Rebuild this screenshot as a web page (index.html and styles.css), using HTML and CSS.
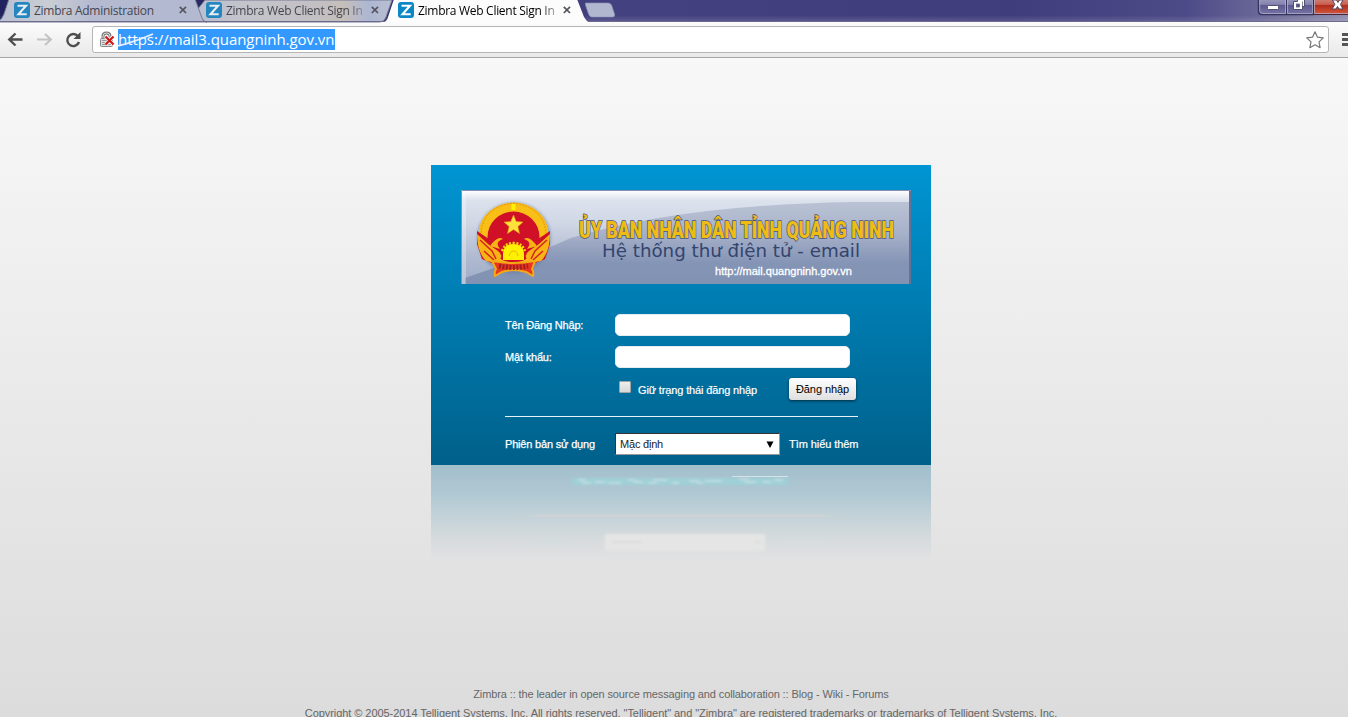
FILE: index.html
```html
<!DOCTYPE html>
<html lang="vi">
<head>
<meta charset="utf-8">
<title>Zimbra Web Client Sign In</title>
<link rel="stylesheet" href="styles.css">
</head>
<body>
<header class="tabstrip">
  <svg class="tab-shapes" width="1348" height="23" viewBox="0 0 1348 23">
    <defs>
      <linearGradient id="t1" x1="0" x2="1" y1="0" y2="0"><stop offset="0" stop-color="#b9bfd2"/><stop offset=".25" stop-color="#c9cdd4"/><stop offset=".45" stop-color="#b5bad0"/><stop offset="1" stop-color="#b2b9d0"/></linearGradient>
      <linearGradient id="t2" x1="0" x2="1" y1="0" y2="0"><stop offset="0" stop-color="#babfd0"/><stop offset=".25" stop-color="#c3c4cb"/><stop offset=".6" stop-color="#c3c0c4"/><stop offset=".75" stop-color="#c5beba"/><stop offset=".88" stop-color="#adb7d3"/><stop offset="1" stop-color="#b9bfd0"/></linearGradient>
      <linearGradient id="glass" x1="0" x2="0" y1="0" y2="1"><stop offset="0" stop-color="#9998bc"/><stop offset=".35" stop-color="#8583ad"/><stop offset=".4" stop-color="#5b5990"/><stop offset="1" stop-color="#7775a6"/></linearGradient>
      <linearGradient id="red" x1="0" x2="0" y1="0" y2="1"><stop offset="0" stop-color="#d08178"/><stop offset=".35" stop-color="#c85f50"/><stop offset=".4" stop-color="#b12c1c"/><stop offset="1" stop-color="#d55a3d"/></linearGradient>
    </defs>
    <path d="M205 0H392L386 17Q384 22 379 22H206Q203 22 201 17L197 10Z" fill="url(#t2)" stroke="#777b93"/>
    <path d="M-3 22Q2 20 4 14L9 -1H195L202 18Q203 22 207 22Z" fill="url(#t1)" stroke="#777b93"/>
    <path d="M0 21.500H1348" stroke="#6c6b8d"/>
    <path d="M383 23Q387 21 388 17L394 -1H577L584 17Q586 21 590 23Z" fill="#fcfcfc"/>
    <path d="M585.500 3H608Q610.500 3 611.500 5L614.500 14Q615.500 17 612.500 17H592Q589.500 17 588.500 14L585.500 5Z" fill="#b0b7cf" stroke="#8f94b6" stroke-width=".6"/>
    <path d="M1258.500 -1V11Q1258.500 14.500 1262 14.500H1313V-1Z" fill="url(#glass)" stroke="#35345f" stroke-width="1.500"/>
    <path d="M1313.500 -1V14.500H1349V-1Z" fill="url(#red)" stroke="#4e2335"/>
    <path d="M1259.700 0V11Q1260 13.500 1263 13.500H1285.500V0M1287.500 0V13.500H1312.500V0M1314.500 0V13.500H1348" fill="none" stroke="#b5b3d0" stroke-opacity=".75"/>
    <path d="M1286.500 0V14" stroke="#35345f"/>
    <rect x="1267.500" y="5.500" width="11" height="4" rx="1" fill="#fff" stroke="#50506f"/>
    <path d="M1297.500 -1H1304.500V6.500H1302.500V9.500H1293.500V1.500H1297.500Z" fill="#fff" stroke="#50506f"/>
    <rect x="1296.500" y="4" width="3" height="3" fill="#58568c" stroke="#50506f" stroke-width=".7"/>
    <path d="M1302.500 1.500V7" stroke="#50506f" stroke-width=".7"/>
    <path d="M1332.500 0H1336.500L1338 2.500L1339.500 0H1343L1340.500 4.500L1343 9H1339L1337.500 6.500L1336 9H1332L1334.800 4.500Z" fill="#fff" stroke="#5b4054"/>
  </svg>
  <div class="tab"><svg class="fav" viewBox="0 0 16 16"><rect width="16" height="16" rx="3" fill="#2386be"/><path d="M3.500 3.800H12L4.500 12.300H12.700" fill="none" stroke="#e8edf4" stroke-width="2.100"/></svg><span class="tab-title">Zimbra Administration</span><svg class="x" viewBox="0 0 8 8"><path d="M.8 .8L7 7M7 .8L.8 7"/></svg></div>
  <div class="tab"><svg class="fav" viewBox="0 0 16 16"><rect width="16" height="16" rx="3" fill="#2386be"/><path d="M3.500 3.800H12L4.500 12.300H12.700" fill="none" stroke="#e8edf4" stroke-width="2.100"/></svg><span class="tab-title fade">Zimbra Web Client Sign In</span><svg class="x" viewBox="0 0 8 8"><path d="M.8 .8L7 7M7 .8L.8 7"/></svg></div>
  <div class="tab active"><svg class="fav" viewBox="0 0 16 16"><rect width="16" height="16" rx="3" fill="#0b87c5"/><path d="M3.500 3.800H12L4.500 12.300H12.700" fill="none" stroke="#fff" stroke-width="2.100"/></svg><span class="tab-title fade">Zimbra Web Client Sign In</span><svg class="x" viewBox="0 0 8 8"><path d="M.8 .8L7 7M7 .8L.8 7"/></svg></div>
</header>
<nav class="toolbar">
  <svg class="nav-icons" width="92" height="35" viewBox="0 22 92 35">
    <path d="M22.500 39.500H10M15.500 33.500L9.300 39.500L15.500 45.500" fill="none" stroke="#4e4e4e" stroke-width="2.400"/>
    <path d="M37 39.500H50M45 34L51 39.500L45 45" fill="none" stroke="#c3c3c3" stroke-width="2"/>
    <path d="M78 36.300A6 6 0 1 0 79 42" fill="none" stroke="#4e4e4e" stroke-width="2.400"/>
    <path d="M80.500 32V39H73.500Z" fill="#4e4e4e"/>
  </svg>
  <div class="omnibox">
    <svg class="lock" width="17" height="18" viewBox="0 0 17 18"><path d="M4 8V5Q4 2 7.500 2T11 5V8" fill="none" stroke="#777" stroke-width="3"/><path d="M4 8V5Q4 2 7.500 2T11 5V8" fill="none" stroke="#ddd"/><rect x="1.500" y="7.500" width="12" height="8" rx="1" fill="#ddd" stroke="#888"/><path d="M3 9.500H12M3 11.500H12M3 13.500H12" stroke="#999"/><path d="M6.500 5.500L14.500 13.500M14.500 5.500L6.500 13.500" stroke="#fff" stroke-width="3.800"/><path d="M6.500 5.500L14.500 13.500M14.500 5.500L6.500 13.500" stroke="#cc1712" stroke-width="2.200"/></svg>
    <span class="url">https://mail3.quangninh.gov.vn<svg class="strike" width="36" height="16" viewBox="0 0 36 16"><path d="M0 14Q16 10 35 2" fill="none" stroke="#e7f1fc" stroke-width="1.800"/></svg></span>
    <svg class="star" width="18" height="18" viewBox="0 0 18 18"><path d="M9 .8L11.500 6.200L17.300 6.900L13 10.900L14.100 16.700L9 13.800L3.900 16.700L5 10.900L.7 6.900L6.500 6.200Z" fill="#fff" stroke="#777" stroke-width="1.200" stroke-linejoin="round"/></svg>
  </div>
  <svg class="menu" width="8" height="14" viewBox="0 0 8 14"><path d="M0 1.500H8M0 6.500H8M0 11.500H8" stroke="#555" stroke-width="3"/></svg>
</nav>
<main class="page">
  <section class="card">
    <svg class="banner" width="450" height="94" viewBox="0 0 450 94">
      <defs>
        <linearGradient id="bg" x1="0" x2="0" y1="0" y2="1"><stop offset="0" stop-color="#e2e7f0"/><stop offset=".35" stop-color="#d0d7e5"/><stop offset=".7" stop-color="#b1bbd1"/><stop offset="1" stop-color="#9fabc7"/></linearGradient>
        <linearGradient id="swoop" x1="0" x2="0" y1="0" y2="1"><stop offset="0" stop-color="#bac3d5"/><stop offset=".38" stop-color="#a7b1c9"/><stop offset=".75" stop-color="#8494b5"/><stop offset="1" stop-color="#8192b3"/></linearGradient>
        <linearGradient id="shine" x1="0" x2="0" y1="0" y2="1"><stop offset="0" stop-color="#fff"/><stop offset="1" stop-color="#fff" stop-opacity="0"/></linearGradient>
        <filter id="soft" x="-10%" y="-10%" width="120%" height="120%"><feGaussianBlur stdDeviation="1.500"/></filter>
      </defs>
      <rect width="450" height="94" fill="url(#bg)"/>
      <path d="M4 88Q70 66 110 48Q219 15 390 12H450V94H4Z" fill="url(#swoop)"/>
      <rect width="450" height="10" fill="url(#shine)"/>
      <rect x="1" y="1" width="4" height="93" fill="#fff" opacity=".3"/>
      <path d="M.5 94V.5H450" fill="none" stroke="#8a8fb2"/>
      <path d="M449 1V94" stroke="#657297" stroke-width="2"/>
      <ellipse cx="53" cy="48" rx="37" ry="36" fill="#6b7a9f" opacity=".5" filter="url(#soft)"/>
      <ellipse cx="52.500" cy="44.500" rx="35" ry="32" fill="#f9bf16"/>
      <path d="M20 43Q22 17 52 13Q83 17 85 43" fill="none" stroke="#e59312" stroke-width="1" stroke-dasharray="2 1"/>
      <ellipse cx="52.500" cy="47" rx="26" ry="25.500" fill="#cf1027"/>
      <path d="M16 41L31 51L40 59L33 74L21 69L16 54ZM89 41L74 51L65 59L72 74L84 69L89 54Z" fill="#cf1027"/>
      <path d="M16 44Q16 62 25 71L36 73Q44 66 37 61L27 54ZM89 44Q89 62 80 71L69 73Q61 66 68 61L78 54ZM29 56Q37 45 42 49Q33 52 39 59ZM76 56Q68 45 63 49Q72 52 66 59Z" fill="#f8b316"/>
      <path d="M19 50L31 61L35 69M86 50L74 61L70 69M23 61L33 70M82 61L72 70" stroke="#d3261d" stroke-width="1.500" fill="none"/>
      <path d="M42 70V63Q43 54 52.500 54T63 63V70Z" fill="#fff000"/>
      <path d="M41 61Q44 53 52.500 53T64 61" fill="none" stroke="#ffd70b" stroke-width="2.500" stroke-dasharray="2 1.500"/>
      <path d="M48 66Q49 61 52.500 61T57 66" fill="none" stroke="#e9b500"/>
      <path d="M31 71Q52 75 74 71L71 79Q73 82 72 86L65 82Q52 78 41 82L34 86Q33 82 35 79Z" fill="#e73520" stroke="#f5a818" stroke-width="2"/>
      <path d="M38 76Q52 79 67 76" stroke="#9e2020" stroke-width="5" stroke-dasharray="2 1.500" fill="none"/>
      <path d="M52.500 25L55.200 31.600L62 32L56.900 36.600L58.500 43.500L52.500 39.600L46.500 43.500L48.100 36.600L43 32L49.800 31.600Z" fill="#ffe23b" stroke="#e99d12" stroke-width=".6"/>
      <path d="M52.500 14V20" stroke="#fff000" stroke-width="4"/>
      <text class="b-title" x="118" y="47.500" textLength="315" lengthAdjust="spacingAndGlyphs">ỦY BAN NHÂN DÂN TỈNH QUẢNG NINH</text>
      <text class="b-sub" x="141" y="67" textLength="258" lengthAdjust="spacingAndGlyphs">Hệ thống thư điện tử - email</text>
      <text class="b-url" x="254" y="85" textLength="137" lengthAdjust="spacingAndGlyphs">http://mail.quangninh.gov.vn</text>
    </svg>
    <form class="form">
      <div class="row"><label class="lab">Tên Đăng Nhập:</label><input class="field" type="text"></div>
      <div class="row"><label class="lab">Mật khẩu:</label><input class="field" type="password"></div>
      <div class="row remember"><i class="check"></i><span class="keep">Giữ trạng thái đăng nhập</span><button class="btn" type="button">Đăng nhập</button></div>
      <div class="rule"></div>
      <div class="row version"><label class="lab">Phiên bản sử dụng</label><div class="select"><span>Mặc định</span><svg width="8" height="7" viewBox="0 0 8 7"><path d="M.5 .5H7.500L4 7Z"/></svg></div><a class="more">Tìm hiểu thêm</a></div>
    </form>
  </section>
  <svg class="reflection" width="500" height="96" viewBox="0 0 500 96">
    <defs>
      <linearGradient id="rf" x1="0" x2="0" y1="0" y2="1"><stop offset="0" stop-color="#a2bfcc"/><stop offset=".3" stop-color="#b0c8d3"/><stop offset=".6" stop-color="#c9d5da"/><stop offset=".8" stop-color="#d8dcde"/><stop offset="1" stop-color="#e2e2e2"/></linearGradient>
      <filter id="b1" x="-5%" y="-60%" width="110%" height="220%"><feGaussianBlur stdDeviation="1.800 1"/></filter>
      <linearGradient id="fadeline"><stop offset="0" stop-color="#d9d5d6" stop-opacity="0"/><stop offset=".05" stop-color="#d5d2d4"/><stop offset=".95" stop-color="#d5d2d4"/><stop offset="1" stop-color="#d9d5d6" stop-opacity="0"/></linearGradient>
    </defs>
    <rect width="500" height="96" fill="url(#rf)"/>
    <g filter="url(#b1)"><rect x="141" y="13" width="216" height="7" fill="#9fd0d7"/><path d="M147 15H155M151 18H160M164 17H174M177 18H190M197 15H205M203 17H212M217 18H226M222 15H236M241 18H248M258 16H268M266 18H272M274 16H291M308 14H318M313 17H325M332 17H340M343 15H352" stroke="#bfdcdf" stroke-width="1.800"/></g>
    <rect x="301" y="11" width="56" height="1" fill="#d3e4e7"/>
    <rect x="95" y="50" width="308" height="1.500" fill="url(#fadeline)"/>
    <g filter="url(#b1)"><rect x="174" y="69" width="160" height="17" fill="#e5e5e5"/><path d="M180 77H210M324 77H330" stroke="#dedede" stroke-width="3"/></g>
    <path d="M346 72.500H400" stroke="#d2dde0"/>
    <rect x="100" y="75" width="35" height="3" fill="#d0dbdf" opacity=".6" filter="url(#b1)"/>
  </svg>
  <footer class="foot">
    <p class="f1">Zimbra :: the leader in open source messaging and collaboration :: Blog - Wiki - Forums</p>
    <p class="f2">Copyright © 2005-2014 Telligent Systems, Inc. All rights reserved. "Telligent" and "Zimbra" are registered trademarks or trademarks of Telligent Systems, Inc.</p>
  </footer>
</main>
</body>
</html>
```
FILE: styles.css
```css
* { box-sizing: border-box; }
body { margin: 0; width: 1348px; height: 717px; overflow: hidden; display: flex; flex-direction: column; font-family: "Liberation Sans", Arial, sans-serif; font-size: 11px; }
.tabstrip { position: relative; height: 22px; flex: none; display: flex; background: linear-gradient(rgba(255,255,255,0) 70%, rgba(255,255,255,.15)), linear-gradient(90deg, #22225e 0, #302e6c 30%, #444180 45%, #403d7c 75%, #4d4a88 88%, #77759f 96%, #8f8eae); }
.tab-shapes { position: absolute; left: 0; top: 0; }
.tab { position: relative; width: 192px; height: 20px; padding-left: 14px; display: flex; align-items: center; font: 12px "Open Sans", "Noto Sans", sans-serif; letter-spacing: -.29px; color: #45464f; }
.tab.active { color: #000; }
.fav { width: 16px; height: 16px; flex: none; margin-right: 4px; }
.tab-title { width: 141px; white-space: nowrap; margin-right: 4px; }
.fade { -webkit-mask-image: linear-gradient(90deg, #000 86%, rgba(0,0,0,.2)); mask-image: linear-gradient(90deg, #000 86%, rgba(0,0,0,.2)); }
.x { width: 8px; height: 8px; stroke: #54555c; stroke-width: 1.700; flex: none; }
.toolbar { height: 36px; flex: none; display: flex; align-items: flex-start; background: linear-gradient(#fcfcfc, #e9e9e9); border-bottom: 1px solid #a5a5a5; }
.nav-icons { flex: none; }
.omnibox { margin-top: 4px; width: 1237px; height: 27px; display: flex; align-items: center; background: #fff; border: 1px solid #b5b5b5; border-radius: 3px; flex: none; padding-left: 6px; }
.lock { margin-right: 2px; flex: none; }
.url { position: relative; height: 21px; line-height: 21px; background: #3399ff; color: #fff; font-family: "Open Sans", "Noto Sans", sans-serif; font-size: 15px; letter-spacing: -.06px; width: 217px; white-space: nowrap; }
.strike { position: absolute; left: 0; top: 3px; }
.star { margin-left: auto; margin-right: 4px; }
.menu { margin: 11px 0 0 13px; flex: none; }
.page { flex: 1; min-height: 0; display: flex; flex-direction: column; align-items: flex-start; background: linear-gradient(#f8f8f8, #dcdcdc); }
.card { flex: none; margin: 107px 0 0 431px; width: 500px; height: 300px; padding-top: 25px; background: linear-gradient(#0095d3, #00608a); color: #fff; }
.banner { display: block; margin-left: 30px; }
.b-title { font: 900 24.5px "Roboto", sans-serif; fill: #efbd12; stroke: #4b5578; stroke-width: 1.600px; paint-order: stroke; }
.b-sub { font: 17px "DejaVu Sans", sans-serif; fill: #33446e; }
.b-url { font: 10.500px "Liberation Sans", sans-serif; fill: #fff; stroke: #fff; stroke-width: .3px; }
.form { margin: 30px 0 0 74px; width: 354px; }
.row { display: flex; height: 22px; align-items: center; margin-bottom: 10px; }
.lab { width: 110px; white-space: nowrap; letter-spacing: -.18px; -webkit-text-stroke: .25px #fff; }
.field { width: 235px; height: 22px; border: 1px solid #e6edf2; border-radius: 5px; background: #fff; padding: 0; }
.remember { padding-left: 114px; margin-bottom: 16px; }
.check { width: 12px; height: 12px; margin: 0 7px 5px 0; background: linear-gradient(#eee, #d8d8d8); border: 1px solid #a4a4a4; border-radius: 1px; }
.keep { width: 119px; white-space: nowrap; padding-top: 2px; letter-spacing: -.14px; -webkit-text-stroke: .2px #fff; }
.btn { width: 67px; height: 22px; margin-left: 32px; padding: 0; border: 0; border-radius: 3px; font: 11px "Liberation Sans", sans-serif; letter-spacing: -.08px; color: #000; white-space: nowrap; background: linear-gradient(#fff, #dfdfdf); box-shadow: 0 1px 3px rgba(0,0,0,.6); }
.rule { height: 1px; background: #e9f2f6; width: 353px; margin-bottom: 16px; }
.version { margin: 0; }
.select { width: 165px; height: 22px; background: #fff; color: #222; border: 1px solid #999; border-top-color: #333; border-left-color: #333; display: flex; align-items: center; justify-content: space-between; padding: 0 5px 0 4px; letter-spacing: -.2px; }
.more { margin-left: 9px; white-space: nowrap; letter-spacing: -.07px; -webkit-text-stroke: .2px #fff; }
.reflection { display: block; margin-left: 431px; flex: none; }
.foot { width: 1362px; flex: none; margin-top: 127px; text-align: center; color: #666; white-space: nowrap; }
.foot p { margin: 0; line-height: 13px; }
.f1 { letter-spacing: -.115px; }
.foot .f2 { padding-top: 6px; letter-spacing: -.06px; }
```
